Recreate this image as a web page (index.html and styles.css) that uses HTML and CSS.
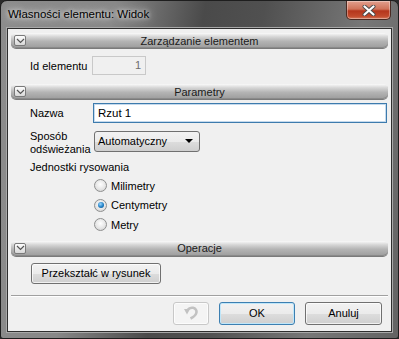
FILE: index.html
```html
<!DOCTYPE html>
<html lang="pl">
<head>
    <meta charset="UTF-8">
    <title>Własności elementu: Widok</title>
    <link rel="stylesheet" href="styles.css">
</head>
<body>
    <div class="window">
        <div class="titlebar">
            <span class="title">Własności elementu: Widok</span>
            <div class="close">
                <svg width="14" height="11" viewBox="0 0 14 11">
                    <path d="M2.5 1.5 L11.5 9.5 M11.5 1.5 L2.5 9.5" stroke="#4a4a4a" stroke-width="4" stroke-linecap="round"/>
                    <path d="M2.5 1.5 L11.5 9.5 M11.5 1.5 L2.5 9.5" stroke="#fff" stroke-width="2.2" stroke-linecap="round"/>
                </svg>
            </div>
        </div>
        <div class="client">
            <div class="section">
                <span class="toggle"><svg width="9" height="6" viewBox="0 0 9 6"><path d="M1 1 L4.5 4.5 L8 1" stroke="#555" stroke-width="1.2" fill="none"/></svg></span>
                <span class="section-title">Zarządzanie elementem</span>
            </div>
            <div class="row row-id">
                <label class="lbl">Id elementu</label>
                <div class="field field-id">1</div>
            </div>

            <div class="section">
                <span class="toggle"><svg width="9" height="6" viewBox="0 0 9 6"><path d="M1 1 L4.5 4.5 L8 1" stroke="#555" stroke-width="1.2" fill="none"/></svg></span>
                <span class="section-title">Parametry</span>
            </div>
            <div class="row row-name">
                <label class="lbl">Nazwa</label>
                <div class="field field-name">Rzut 1</div>
            </div>
            <div class="row row-mode">
                <label class="lbl lbl-two">Sposób<br>odświeżania</label>
                <div class="select">Automatyczny<span class="arrow"></span></div>
            </div>
            <div class="units-title">Jednostki rysowania</div>
            <div class="radios">
                <div class="radio"><span class="dot"></span>Milimetry</div>
                <div class="radio"><span class="dot checked"></span>Centymetry</div>
                <div class="radio"><span class="dot"></span>Metry</div>
            </div>

            <div class="section">
                <span class="toggle"><svg width="9" height="6" viewBox="0 0 9 6"><path d="M1 1 L4.5 4.5 L8 1" stroke="#555" stroke-width="1.2" fill="none"/></svg></span>
                <span class="section-title">Operacje</span>
            </div>
            <div class="row row-op">
                <button class="btn btn-convert">Przekształć w rysunek</button>
            </div>

            <div class="separator"></div>
            <div class="footer">
                <button class="btn btn-undo" disabled>
                    <svg width="16" height="14" viewBox="0 0 16 14">
                        <path d="M1 3 L7 3 L4 8.5 Z" fill="#c2c2c2"/>
                        <path d="M4.5 4 C6 2 8 1.5 10 1.8 C12.5 2.3 14 4.5 13.3 7 C12.7 9.3 10.5 11 7.5 12.5" stroke="#c2c2c2" stroke-width="2.6" fill="none"/>
                    </svg>
                </button>
                <button class="btn btn-ok">OK</button>
                <button class="btn btn-cancel">Anuluj</button>
            </div>
        </div>
    </div>
</body>
</html>
```

FILE: styles.css
```css
html, body {
    margin: 0;
    padding: 0;
    background: #2b2b2b;
}
body {
    font-family: "Liberation Sans", Arial, sans-serif;
    font-size: 11px;
    color: #000;
}
.window {
    width: 399px;
    height: 339px;
    box-sizing: border-box;
    border: 1px solid #1e1e1e;
    border-radius: 7px 7px 3px 3px;
    background: linear-gradient(100deg, #8c8c8c 0%, #888888 25%, #4a4a4a 45%, #505050 58%, #777777 80%, #636363 100%);
    padding: 0 6px 6px 6px;
    display: flex;
    flex-direction: column;
}
.titlebar {
    height: 27px;
    display: flex;
    align-items: flex-start;
    justify-content: space-between;
}
.title {
    margin-top: 7px;
    margin-left: 1px;
    font-size: 11.5px;
    color: #000;
    text-shadow: 0 0 10px rgba(255,255,255,0.9), 0 0 4px rgba(255,255,255,0.8);
}
.close {
    width: 45px;
    height: 19px;
    margin-right: 1px;
    box-sizing: border-box;
    border: 1px solid #4a2a22;
    border-top: none;
    border-radius: 0 0 5px 5px;
    background: linear-gradient(to bottom, #e2a08e 0%, #d0735a 45%, #b5361c 55%, #c24a2c 85%, #d47a5c 100%);
    display: flex;
    align-items: center;
    justify-content: center;
    box-shadow: inset 0 0 0 1px rgba(255,255,255,0.35);
}
.client {
    flex: 1;
    background: #f0f0f0;
    border: 1px solid #2e2e2e;
    box-shadow: 0 0 0 1px #a8a8a8;
    display: flex;
    flex-direction: column;
    padding: 4px 3px 0 3px;
}
.section {
    height: 15px;
    border-radius: 5px;
    background: linear-gradient(to bottom, #fafafa 0%, #d6d6d6 25%, #b4b4b4 55%, #9c9c9c 100%);
    box-shadow: 0 1px 0 #7a7a7a, inset 0 -1px 0 #8a8a8a;
    display: flex;
    align-items: center;
}
.toggle {
    width: 12px;
    height: 11px;
    margin-left: 3px;
    box-sizing: border-box;
    border: 1px solid #7a7a7a;
    border-radius: 2px;
    background: linear-gradient(to bottom, #fdfdfd, #d8d8d8);
    display: flex;
    align-items: center;
    justify-content: center;
}
.section-title {
    flex: 1;
    text-align: center;
    margin-right: 15px;
    color: #1a1a1a;
}
.row {
    display: flex;
    align-items: center;
}
.lbl {
    width: 62px;
    padding-left: 19px;
    flex-shrink: 0;
    white-space: nowrap;
}
.row-id {
    margin-top: 8px;
    margin-bottom: 9px;
    height: 19px;
}
.field {
    box-sizing: border-box;
    height: 19px;
    border: 1px solid #abadb3;
    background: #fff;
    padding: 2px 4px;
    line-height: 13px;
}
.field-id {
    width: 54px;
    background: #f0f0f0;
    border-color: #c9c9c9;
    text-align: right;
    color: #6d6d6d;
}
.row-name {
    margin-top: 4px;
    height: 20px;
}
.field-name {
    flex: 1;
    height: 20px;
    margin-left: 1px;
    margin-right: 1px;
    border-color: #3d7bad;
    box-shadow: inset 0 0 0 1px #c5daed;
    padding: 3px 4px;
    font-size: 11.5px;
}
.row-mode {
    margin-top: 7px;
    height: 22px;
}
.lbl-two {
    line-height: 13px;
    margin-top: 4px;
}
.select {
    width: 106px;
    height: 21px;
    margin-left: 2px;
    box-sizing: border-box;
    border: 1px solid #707070;
    border-radius: 3px;
    background: linear-gradient(to bottom, #f2f2f2 0%, #ebebeb 50%, #dddddd 51%, #cfcfcf 100%);
    padding: 0 0 0 3px;
    display: flex;
    align-items: center;
    justify-content: space-between;
}
.arrow {
    width: 0;
    height: 0;
    margin-right: 6px;
    border-left: 4px solid transparent;
    border-right: 4px solid transparent;
    border-top: 4px solid #000;
}
.units-title {
    padding-left: 19px;
    margin-top: 9px;
}
.radios {
    padding-left: 83px;
    margin-top: 3px;
    margin-bottom: 6px;
}
.radio {
    display: flex;
    align-items: center;
    height: 19.5px;
}
.dot {
    width: 13px;
    height: 13px;
    box-sizing: border-box;
    border: 1px solid #8e8f8f;
    border-radius: 50%;
    background: radial-gradient(circle at 50% 40%, #fefefe 0%, #e6e6e6 55%, #cbcbcb 100%);
    margin-right: 4px;
    position: relative;
}
.dot.checked::after {
    content: "";
    position: absolute;
    left: 2.5px;
    top: 2.5px;
    width: 6px;
    height: 6px;
    border-radius: 50%;
    background: radial-gradient(circle at 40% 35%, #9ad6ff 0%, #1f7fc4 55%, #0a4a86 100%);
}
.row-op {
    margin-top: 7px;
    padding-left: 20px;
}
.btn {
    font-family: "Liberation Sans", Arial, sans-serif;
    font-size: 11px;
    box-sizing: border-box;
    border: 1px solid #707070;
    border-radius: 3px;
    background: linear-gradient(to bottom, #f2f2f2 0%, #ebebeb 50%, #dddddd 51%, #cfcfcf 100%);
    color: #000;
    padding: 0;
    box-shadow: inset 0 0 0 1px rgba(255,255,255,0.7);
}
.btn-convert {
    width: 130px;
    height: 21px;
}
.separator {
    margin: 11px 0 0 0;
    height: 1px;
    background: #a0a0a0;
    border-bottom: 1px solid #fff;
}
.footer {
    display: flex;
    justify-content: flex-end;
    gap: 10px;
    padding: 5px 6px 0 0;
}
.btn-undo {
    width: 36px;
    height: 23px;
    border-color: #c8c8c8;
    background: #f4f4f4;
    display: flex;
    align-items: center;
    justify-content: center;
}
.btn-ok {
    width: 76px;
    height: 23px;
    border-color: #3c7fb1;
    box-shadow: inset 0 0 0 1px #bfe6f9;
}
.btn-cancel {
    width: 77px;
    height: 23px;
}
```
